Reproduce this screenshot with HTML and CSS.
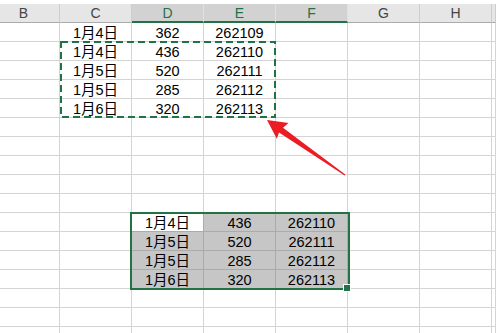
FILE: index.html
```html
<!DOCTYPE html>
<html lang="zh-CN">
<head>
  <meta charset="UTF-8" />
  <meta name="viewport" content="width=device-width, initial-scale=1.0"/>
  <title>复制粘贴</title>
  <link rel="stylesheet" href="styles.css">
</head>
<body>
  <div class="sheet">
    <div class="hdr">
      <div class="h">B</div><div class="h">C</div><div class="h on">D</div><div class="h on">E</div><div class="h on">F</div><div class="h">G</div><div class="h">H</div><div class="h"></div>
    </div>

    <div class="row"><div class="c"></div><div class="c">1月4日</div><div class="c">362</div><div class="c">262109</div><div class="c"></div><div class="c"></div><div class="c"></div><div class="c"></div></div>
    <div class="row"><div class="c"></div><div class="c">1月4日</div><div class="c">436</div><div class="c">262110</div><div class="c"></div><div class="c"></div><div class="c"></div><div class="c"></div></div>
    <div class="row"><div class="c"></div><div class="c">1月5日</div><div class="c">520</div><div class="c">262111</div><div class="c"></div><div class="c"></div><div class="c"></div><div class="c"></div></div>
    <div class="row"><div class="c"></div><div class="c">1月5日</div><div class="c">285</div><div class="c">262112</div><div class="c"></div><div class="c"></div><div class="c"></div><div class="c"></div></div>
    <div class="row"><div class="c"></div><div class="c">1月6日</div><div class="c">320</div><div class="c">262113</div><div class="c"></div><div class="c"></div><div class="c"></div><div class="c"></div></div>
    <div class="row"><div class="c"></div><div class="c"></div><div class="c"></div><div class="c"></div><div class="c"></div><div class="c"></div><div class="c"></div><div class="c"></div></div>
    <div class="row"><div class="c"></div><div class="c"></div><div class="c"></div><div class="c"></div><div class="c"></div><div class="c"></div><div class="c"></div><div class="c"></div></div>
    <div class="row"><div class="c"></div><div class="c"></div><div class="c"></div><div class="c"></div><div class="c"></div><div class="c"></div><div class="c"></div><div class="c"></div></div>
    <div class="row"><div class="c"></div><div class="c"></div><div class="c"></div><div class="c"></div><div class="c"></div><div class="c"></div><div class="c"></div><div class="c"></div></div>
    <div class="row"><div class="c"></div><div class="c"></div><div class="c"></div><div class="c"></div><div class="c"></div><div class="c"></div><div class="c"></div><div class="c"></div></div>

    <div class="row"><div class="c"></div><div class="c"></div><div class="c active">1月4日</div><div class="c sel">436</div><div class="c sel">262110</div><div class="c"></div><div class="c"></div><div class="c"></div></div>
    <div class="row"><div class="c"></div><div class="c"></div><div class="c sel">1月5日</div><div class="c sel">520</div><div class="c sel">262111</div><div class="c"></div><div class="c"></div><div class="c"></div></div>
    <div class="row"><div class="c"></div><div class="c"></div><div class="c sel">1月5日</div><div class="c sel">285</div><div class="c sel">262112</div><div class="c"></div><div class="c"></div><div class="c"></div></div>
    <div class="row"><div class="c"></div><div class="c"></div><div class="c sel">1月6日</div><div class="c sel">320</div><div class="c sel">262113</div><div class="c"></div><div class="c"></div><div class="c"></div></div>

    <div class="row"><div class="c"></div><div class="c"></div><div class="c"></div><div class="c"></div><div class="c"></div><div class="c"></div><div class="c"></div><div class="c"></div></div>
    <div class="row"><div class="c"></div><div class="c"></div><div class="c"></div><div class="c"></div><div class="c"></div><div class="c"></div><div class="c"></div><div class="c"></div></div>
    <div class="row"><div class="c"></div><div class="c"></div><div class="c"></div><div class="c"></div><div class="c"></div><div class="c"></div><div class="c"></div><div class="c"></div></div>
  </div>

  <!-- copy marquee, arrow, paste selection -->
  <svg class="overlay" width="496" height="333" viewBox="0 0 496 333">
    <rect x="61" y="42" width="214" height="75" fill="none" stroke="#217346" stroke-width="2" stroke-dasharray="7 4"/>
    <polygon fill="#ec1c24" points="267,120 288.5,123 283,127.8 345.3,174.5 344.7,175.5 279,132.5 276.8,138.8"/>
    <rect x="131" y="213" width="218" height="76" fill="none" stroke="#217346" stroke-width="2"/>
    <rect x="343" y="284" width="8" height="8" fill="#fff"/>
    <rect x="344" y="285" width="6" height="6" fill="#217346"/>
  </svg>
</body>
</html>
```

FILE: styles.css
```css
body {
  margin: 0;
  padding-top: 4px;
  background: #fff;
  font-family: "Liberation Sans", "Noto Sans CJK SC", sans-serif;
  color: #000;
  overflow: hidden;
  position: relative;
  width: 496px;
  height: 333px;
  box-sizing: border-box;
}
.hdr, .row {
  display: flex;
}
.h, .c {
  flex: 0 0 72px;
  box-sizing: border-box;
  height: 19px;
  text-align: center;
  white-space: nowrap;
}
/* column B is cut off on the left, column I on the right */
.h:first-child, .c:first-child {
  flex-basis: 60px;
  padding-right: 12px;
}
.h:last-child, .c:last-child {
  flex: 1 1 0;
}
.h {
  background: #e6e6e6;
  border-right: 1px solid #cdcdcd;
  border-bottom: 1px solid #ababab;
  color: #444;
  font-size: 14px;
  line-height: 19px;
}
.h.on {
  background: #d2d2d2;
  color: #217346;
  border-bottom: 2px solid #217346;
  border-right-color: #e0e0e0;
}
.c {
  border-right: 1px solid #d4d4d4;
  border-bottom: 1px solid #d4d4d4;
  font-size: 14.5px;
  line-height: 18px;
  padding-top: 1px;
}
.c.sel {
  background: #c6c6c6;
  border-color: #ababab;
}
.c.active {
  background: #fff;
  border-right-color: #ababab;
  border-bottom-color: #ababab;
}
.overlay {
  position: absolute;
  top: 0;
  left: 0;
  pointer-events: none;
}
```
